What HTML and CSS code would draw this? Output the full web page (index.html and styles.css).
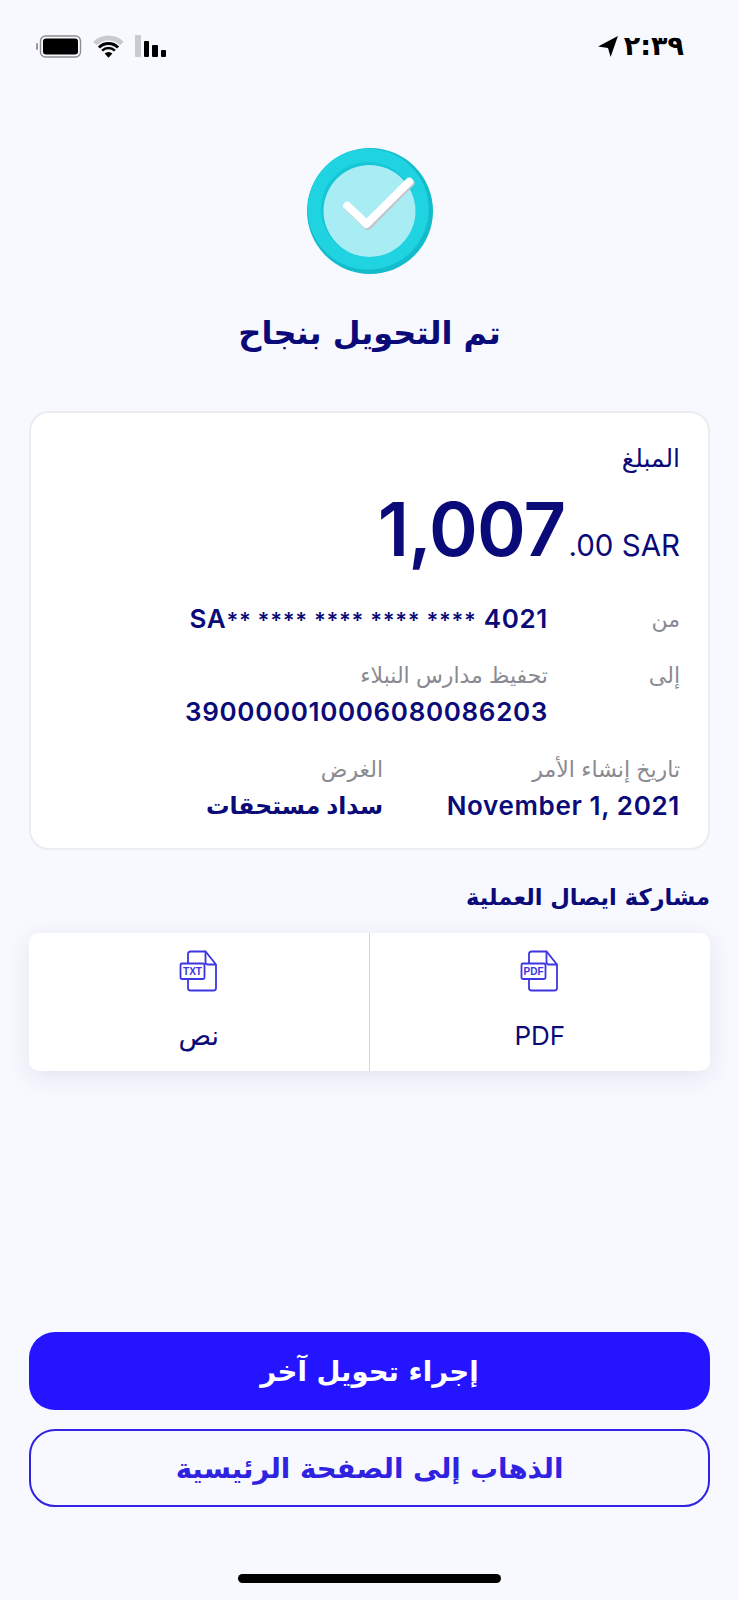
FILE: index.html
```html
<!DOCTYPE html>
<html lang="ar" dir="rtl">
<head>
<meta charset="utf-8">
<title>تم التحويل بنجاح</title>
<link rel="stylesheet" href="styles.css">
</head>
<body>
<main class="screen">
  <header class="status" dir="ltr">
    <div class="status-icons">
      <svg class="battery" width="46" height="24" viewBox="0 0 46 24">
        <rect x="0" y="9" width="2" height="7" rx="1" fill="#9a9a9e"/>
        <rect x="4.500" y="2" width="40" height="21" rx="5" fill="none" stroke="#8e8e92" stroke-width="1.400"/>
        <rect x="7" y="4.500" width="35" height="16" rx="3" fill="#000"/>
      </svg>
      <svg class="wifi" width="31" height="23" viewBox="0 0 31 23">
        <path d="M2.060 8.560A19 19 0 0 1 28.940 8.560" fill="none" stroke="#c9cacd" stroke-width="5"/>
        <path d="M5.950 12.450A13.500 13.500 0 0 1 25.050 12.450" fill="none" stroke="#000" stroke-width="3"/>
        <path d="M9.140 15.640A9 9 0 0 1 21.860 15.640" fill="none" stroke="#000" stroke-width="2.500"/>
        <path d="M15.500 22.800L11.600 18.500A5.500 5.500 0 0 1 19.400 18.500Z" fill="#000"/>
      </svg>
      <div class="signal">
        <span class="bar bar-off"></span>
        <span class="bar bar-3"></span>
        <span class="bar bar-2"></span>
        <span class="bar bar-1"></span>
      </div>
    </div>
    <div class="clock">
      <svg width="22" height="23" viewBox="0 0 21 22"><path d="M20 1 L13 21 L10.500 12.500 L1 11 Z" fill="#000"/></svg>
      <span class="clock-text">٢:٣٩</span>
    </div>
  </header>

  <section class="hero">
    <svg class="check" width="128" height="128" viewBox="0 0 128 128">
      <circle cx="64" cy="64" r="63" fill="#12bccb"/>
      <circle cx="62.200" cy="62.200" r="60.500" fill="#1fd3e0"/>
      <circle cx="62" cy="62" r="47" fill="#14c6d6"/>
      <circle cx="63.500" cy="64" r="46" fill="#a8ecf4"/>
      <path d="M42.500 60.500 L62 79 L104.500 36" fill="none" stroke="#c4c4cc" stroke-width="8" stroke-linecap="round" stroke-linejoin="round"/>
      <path d="M41.200 58.700 L60.500 77 L103.300 34.700" fill="none" stroke="#fff" stroke-width="8" stroke-linecap="round" stroke-linejoin="round"/>
    </svg>
    <h1 class="title">تم التحويل بنجاح</h1>
  </section>

  <section class="card">
    <div class="amount-label">المبلغ</div>
    <div class="amount" dir="ltr"><span class="amount-main">1,007</span><span class="amount-rest">.00 SAR</span></div>
    <div class="row row-from">
      <div class="label">من</div>
      <div class="value" dir="ltr">SA<span class="stars">** **** **** **** ****</span> 4021</div>
    </div>
    <div class="row row-to">
      <div class="label">إلى</div>
      <div class="stack">
        <div class="label">تحفيظ مدارس النبلاء</div>
        <div class="value" dir="ltr">390000010006080086203</div>
      </div>
    </div>
    <div class="row row-meta">
      <div class="stack">
        <div class="label">تاريخ إنشاء الأمر</div>
        <div class="value" dir="ltr">November 1, 2021</div>
      </div>
      <div class="stack">
        <div class="label">الغرض</div>
        <div class="value value-ar">سداد مستحقات</div>
      </div>
    </div>
  </section>

  <h2 class="share-title">مشاركة ايصال العملية</h2>
  <section class="share">
    <div class="share-item">
      <svg class="file" width="40" height="42" viewBox="0 0 40 42">
        <path d="M9 13V4C9 2.500 10 1.500 11.500 1.500H26.500L37 14.500V38C37 39.500 36 40.500 34.500 40.500H11.500C10 40.500 9 39.500 9 38V29" fill="none" stroke="#3d35e0" stroke-width="1.800"/>
        <path d="M26.500 1.500V12C26.500 13.500 27.500 14.500 29 14.500H37" fill="none" stroke="#3d35e0" stroke-width="1.800"/>
        <rect x="1.500" y="13.500" width="24" height="15.500" rx="1.500" fill="#fff" stroke="#3d35e0" stroke-width="1.800"/>
        <text x="13.500" y="25" class="file-text" text-anchor="middle">PDF</text>
      </svg>
      <div class="share-name">PDF</div>
    </div>
    <div class="share-item">
      <svg class="file" width="40" height="42" viewBox="0 0 40 42">
        <path d="M9 13V4C9 2.500 10 1.500 11.500 1.500H26.500L37 14.500V38C37 39.500 36 40.500 34.500 40.500H11.500C10 40.500 9 39.500 9 38V29" fill="none" stroke="#3d35e0" stroke-width="1.800"/>
        <path d="M26.500 1.500V12C26.500 13.500 27.500 14.500 29 14.500H37" fill="none" stroke="#3d35e0" stroke-width="1.800"/>
        <rect x="1.500" y="13.500" width="24" height="15.500" rx="1.500" fill="#fff" stroke="#3d35e0" stroke-width="1.800"/>
        <text x="13.500" y="25" class="file-text" text-anchor="middle">TXT</text>
      </svg>
      <div class="share-name share-name-ar">نص</div>
    </div>
  </section>

  <div class="spacer"></div>

  <div class="actions">
    <button class="btn btn-primary">إجراء تحويل آخر</button>
    <button class="btn btn-secondary">الذهاب إلى الصفحة الرئيسية</button>
  </div>
  <div class="home-wrap"><div class="home-bar"></div></div>
</main>
</body>
</html>
```
FILE: styles.css
```css
* { box-sizing: border-box; }
html, body { margin: 0; padding: 0; }
body {
  background: #f8f9ff;
  font-family: Inter, "DejaVu Sans", sans-serif;
  color: #0a0a78;
}
.screen {
  width: 739px;
  height: 1600px;
  display: flex;
  flex-direction: column;
  padding: 0 29px;
}
.status {
  height: 92px;
  margin: 0 -29px;
  padding: 33px 55px 0 36px;
  display: flex;
  justify-content: space-between;
  align-items: flex-start;
}
.status-icons { display: flex; align-items: center; gap: 11px; padding-top: 1px; }
.battery, .wifi { display: block; }
.signal { display: flex; align-items: flex-end; gap: 3px; height: 22px; }
.bar { width: 5.500px; border-radius: 1px; background: #000; display: block; }
.bar-off { height: 22px; background: #c9cacd; }
.bar-3 { height: 16px; }
.bar-2 { height: 12px; }
.bar-1 { height: 7px; }
.clock { display: flex; align-items: center; gap: 5px; color: #000; }
.clock-text { font-family: "DejaVu Sans", sans-serif; font-size: 27px; font-weight: 700; line-height: 26px; }
.hero { display: flex; flex-direction: column; align-items: center; padding-top: 55px; }
.check { display: block; }
.title {
  margin: 35px 0 0;
  font-family: "DejaVu Sans", sans-serif;
  font-size: 32px;
  line-height: 46px;
  font-weight: 700;
  color: #0a0a78;
  text-align: center;
}
.card {
  margin-top: 55px;
  height: 439px;
  background: #fff;
  border: 2px solid #ebecf1;
  border-radius: 20px;
  padding: 30px 28px 0;
}
.amount-label { font-size: 25px; line-height: 30px; }
.amount {
  display: flex;
  justify-content: flex-end;
  align-items: baseline;
  margin-top: 15px;
  height: 82px;
}
.amount-main { font-size: 74px; line-height: 82px; font-weight: 600; letter-spacing: -.8px; }
.amount-rest { font-size: 29.500px; line-height: 40px; margin-left: 3px; }
.row { display: grid; }
.row-from, .row-to { grid-template-columns: 132px 1fr; }
.row-from { margin-top: 32px; }
.row-to { margin-top: 23px; }
.row-meta { grid-template-columns: 297px 1fr; margin-top: 25px; }
.row-from > .label { line-height: 34px; }
.label { font-size: 22px; line-height: 30px; color: #8a8a92; }
.value { font-size: 26px; line-height: 34px; font-weight: 600; color: #0a0a78; text-align: right; letter-spacing: .65px; }
.stars { font-size: 22px; }
.value-ar { font-size: 23.500px; letter-spacing: 0; }
.stack { display: flex; flex-direction: column; gap: 5px; }
.share-title {
  margin: 30px 0 0;
  font-family: "DejaVu Sans", sans-serif;
  font-size: 22.600px;
  line-height: 34px;
  font-weight: 700;
  color: #0a0a78;
}
.share {
  margin-top: 19px;
  height: 138px;
  display: grid;
  grid-template-columns: 1fr 1fr;
  background: #fff;
  border-radius: 10px;
  box-shadow: 0 6px 24px rgba(30, 35, 90, .10);
}
.share-item {
  display: flex;
  flex-direction: column;
  align-items: center;
  padding-top: 17px;
}
.share-item + .share-item { border-right: 1px solid #d6d6da; }
.file { display: block; }
.file-text { font-family: "Liberation Sans", sans-serif; font-size: 10px; font-weight: 700; fill: #3d35e0; }
.share-name { margin-top: 26px; font-size: 26px; line-height: 36px; color: #0a0a78; }
.share-name-ar { font-size: 27px; }
.spacer { flex: 1; }
.actions { display: flex; flex-direction: column; gap: 19px; }
.btn {
  height: 78px;
  border-radius: 26px;
  font-family: "DejaVu Sans", sans-serif;
  font-size: 27.600px;
  font-weight: 700;
  cursor: pointer;
}
.btn-primary { background: #2414ff; border: 0; color: #fff; }
.btn-secondary { background: transparent; border: 2px solid #2f22e0; color: #2f22e0; }
.home-wrap { height: 93px; display: flex; justify-content: center; padding-top: 67px; }
.home-bar { width: 263px; height: 9px; border-radius: 5px; background: #000; }
```
